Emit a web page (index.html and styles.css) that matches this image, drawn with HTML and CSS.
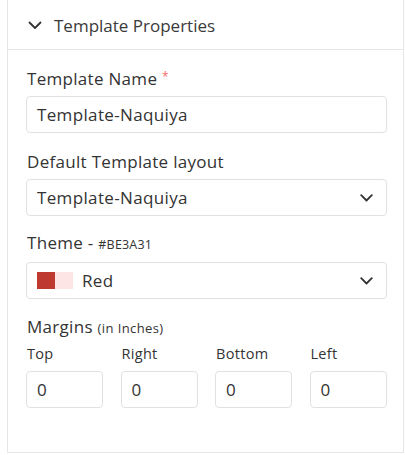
FILE: index.html
```html
<!DOCTYPE html>
<html>
<head>
<meta charset="utf-8">
<link rel="stylesheet" href="styles.css">
</head>
<body>
<div class="panel">
  <div class="panel-header">
    <svg class="chev" width="14" height="9" viewBox="0 0 14 9"><path d="M1.5 1.5 L7 7 L12.5 1.5" fill="none" stroke="#333" stroke-width="1.8" stroke-linecap="round" stroke-linejoin="round"/></svg>
    <span class="panel-title">Template Properties</span>
  </div>
  <div class="panel-body">
    <div class="field f-name">
      <div class="label">Template Name <span class="req">*</span></div>
      <div class="input">Template-Naquiya</div>
    </div>
    <div class="field f-layout">
      <div class="label">Default Template layout</div>
      <div class="input select">
        <span>Template-Naquiya</span>
        <svg class="sel-chev" width="13" height="8" viewBox="0 0 13 8"><path d="M1.2 1.2 L6.5 6.5 L11.8 1.2" fill="none" stroke="#333" stroke-width="1.8" stroke-linecap="round" stroke-linejoin="round"/></svg>
      </div>
    </div>
    <div class="field f-theme">
      <div class="label">Theme - <span class="small">#BE3A31</span></div>
      <div class="input select">
        <span class="theme"><span class="sw sw-dark"></span><span class="sw sw-light"></span><span class="theme-name">Red</span></span>
        <svg class="sel-chev" width="13" height="8" viewBox="0 0 13 8"><path d="M1.2 1.2 L6.5 6.5 L11.8 1.2" fill="none" stroke="#333" stroke-width="1.8" stroke-linecap="round" stroke-linejoin="round"/></svg>
      </div>
    </div>
    <div class="field f-margins">
      <div class="label">Margins <span class="small small-m">(in Inches)</span></div>
      <div class="margins">
        <div class="m-col"><div class="m-label">Top</div><div class="input m-input">0</div></div>
        <div class="m-col"><div class="m-label">Right</div><div class="input m-input">0</div></div>
        <div class="m-col"><div class="m-label">Bottom</div><div class="input m-input">0</div></div>
        <div class="m-col"><div class="m-label">Left</div><div class="input m-input">0</div></div>
      </div>
    </div>
  </div>
</div>
</body>
</html>
```
FILE: styles.css
```css
* { box-sizing: border-box; }
html, body { margin: 0; padding: 0; background: #fff; }
body {
  font-family: "Open Sans", "Noto Sans", sans-serif;
  color: #333;
  width: 405px;
  height: 455px;
  overflow: hidden;
}
.panel {
  margin-left: 7px;
  width: 397px;
  height: 453px;
  border-left: 1px solid #e4e6ea;
  border-right: 1px solid #e4e6ea;
  border-bottom: 1px solid #e4e6ea;
}
.panel-header {
  height: 50px;
  border-bottom: 1px solid #e4e6ea;
  display: flex;
  align-items: center;
  padding-left: 20px;
  padding-top: 1px;
}
.chev { display: block; margin-right: 12px; }
.panel-title { font-size: 17px; color: #3a3a3a; }
.panel-body {
  padding: 18px 16px 0 18px;
  display: flex;
  flex-direction: column;
}
.f-layout { margin-top: 18px; }
.f-theme { margin-top: 16px; }
.f-margins { margin-top: 17px; }
.label { font-size: 17px; color: #333; line-height: 22px; margin-bottom: 6px; padding-left: 1px; letter-spacing: 0.3px; }
.req { color: #f26b6b; font-size: 12px; vertical-align: 4px; line-height: 0; }
.small { font-size: 12.5px; letter-spacing: 0.2px; }
.small-m { font-size: 13px; letter-spacing: 0.4px; }
.input {
  height: 37px;
  border: 1px solid #dfe1e5;
  border-radius: 4px;
  display: flex;
  align-items: center;
  padding-left: 10px;
  font-size: 17px;
  letter-spacing: 0.35px;
  color: #333;
}
.select { justify-content: space-between; padding-right: 13px; }
.sel-chev { display: block; }
.theme { display: flex; align-items: center; }
.sw { width: 18px; height: 17px; display: block; }
.sw-dark { background: #be3a31; }
.sw-light { background: #fde5e5; }
.theme-name { margin-left: 9px; }
.margins { display: flex; gap: 17.5px; }
.m-col { width: 77px; }
.m-label { font-size: 14.5px; line-height: 18px; margin-bottom: 8px; padding-left: 1px; letter-spacing: 0.3px; }
.m-input { padding-left: 10px; }
```
